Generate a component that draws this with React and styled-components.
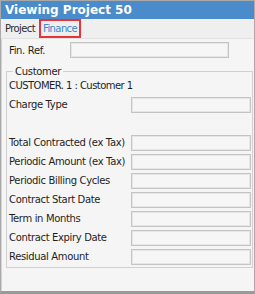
import styled, { createGlobalStyle } from 'styled-components';

const GlobalStyle = createGlobalStyle`
  html, body { margin: 0; padding: 0; background: #ffffff; }
  body { font-family: Tahoma, "DejaVu Sans", "Liberation Sans", sans-serif; }
`;

const Window = styled.div`
  width: 255px;
  height: 294px;
  box-sizing: border-box;
  border: 1px solid #a9a9a9;
  border-bottom: 3px solid #9a9a9a;
  display: flex;
  flex-direction: column;
  background: #f5f5f5;
  overflow: hidden;
`;

const TitleBar = styled.div`
  height: 18px;
  background: #4a8bcb;
  color: #ffffff;
  font-family: "DejaVu Sans", sans-serif;
  font-weight: bold;
  font-size: 12px;
  line-height: 18px;
  padding-left: 4px;
`;

const TabStrip = styled.div`
  height: 19px;
  background: #efefef;
  display: flex;
  align-items: stretch;
  border-bottom: 1px solid #e2e2e2;
`;

const Tab = styled.div`
  font-family: "DejaVu Sans", sans-serif;
  font-size: 10px;
  letter-spacing: -0.6px;
  padding: 0 2px;
  box-sizing: border-box;
  color: ${p => (p.$active ? '#3a86cf' : '#2b2b2b')};
  border: 2px solid ${p => (p.$active ? '#e8333a' : 'transparent')};
  line-height: 15px;
`;

const Panel = styled.div`
  flex: 1;
  display: flex;
  flex-direction: column;
  padding: 3px 0 0 4px;
  border-left: 1px solid #d4d4d4;
`;

const Label = styled.div`
  font-family: "DejaVu Sans", sans-serif;
  font-size: 10px;
  letter-spacing: -0.35px;
  color: #1e1e1e;
  white-space: nowrap;
`;

const Field = styled.div`
  box-sizing: border-box;
  width: ${p => p.$w}px;
  height: 16px;
  background: #f6f6f6;
  border: 1px solid #c4c4c4;
  box-shadow: inset 0 0 0 1px #e6e6e6;
`;

const TopRow = styled.div`
  display: grid;
  grid-template-columns: 61px auto;
  align-items: center;
  padding-left: 3px;
`;

const Group = styled.fieldset`
  margin: 8px 0 0 0;
  width: 247px;
  height: 202px;
  box-sizing: border-box;
  border: 1px solid #d0d0d0;
  padding: 0 0 0 2px;
  display: flex;
  flex-direction: column;
`;

const Legend = styled.legend`
  font-family: "DejaVu Sans", sans-serif;
  font-size: 10px;
  letter-spacing: -0.3px;
  color: #1e1e1e;
  padding: 0 2px;
  margin-left: 4px;
`;

const Customer = styled(Label)`
  height: 18px;
  line-height: 18px;
  letter-spacing: -0.55px;
`;

const Rows = styled.div`
  display: grid;
  grid-template-columns: 122px 120px;
  grid-auto-rows: 19px;
  align-items: center;
`;

const rows = [
  'Charge Type',
  null,
  'Total Contracted (ex Tax)',
  'Periodic Amount (ex Tax)',
  'Periodic Billing Cycles',
  'Contract Start Date',
  'Term in Months',
  'Contract Expiry Date',
  'Residual Amount',
];

export default function App() {
  return (
    <>
      <GlobalStyle />
      <Window>
        <TitleBar>Viewing Project 50</TitleBar>
        <TabStrip>
          <Tab>Project</Tab>
          <Tab $active>Finance</Tab>
        </TabStrip>
        <Panel>
          <TopRow>
            <Label>Fin. Ref.</Label>
            <Field $w={159} />
          </TopRow>
          <Group>
            <Legend>Customer</Legend>
            <Customer>CUSTOMER. 1 : Customer 1</Customer>
            <Rows>
              {rows.map((r, i) =>
                r ? (
                  [<Label key={`l${i}`}>{r}</Label>, <Field key={`f${i}`} $w={120} />]
                ) : (
                  [<span key={`l${i}`} />, <span key={`f${i}`} />]
                )
              )}
            </Rows>
          </Group>
        </Panel>
      </Window>
    </>
  );
}
